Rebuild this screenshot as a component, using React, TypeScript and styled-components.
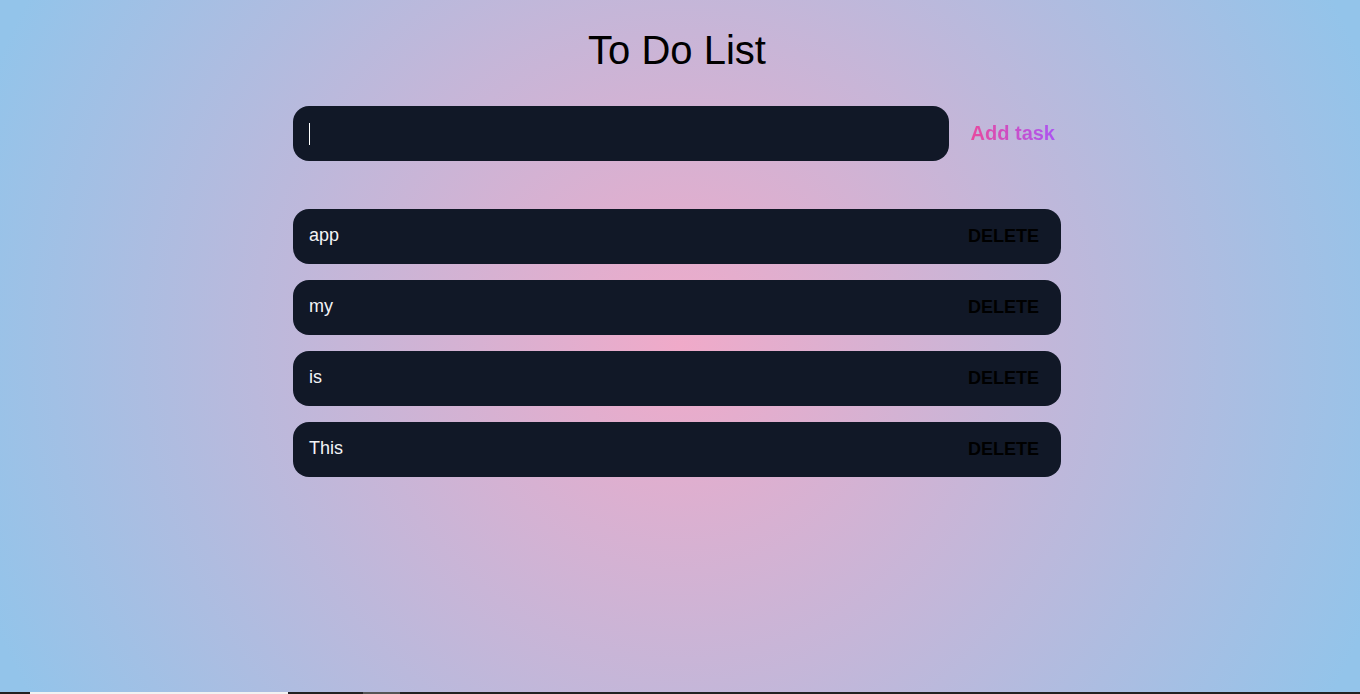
import React, { useState } from "react";
import styled, { createGlobalStyle } from "styled-components";

const GlobalStyle = createGlobalStyle`
  html, body {
    margin: 0;
    padding: 0;
  }
  body {
    font-family: "Liberation Sans", Arial, sans-serif;
    background: #222;
    overflow: hidden;
  }
`;

const Page = styled.main`
  min-height: 692px;
  box-sizing: border-box;
  background: radial-gradient(circle farthest-corner at 50% 50%, #f0aac9 0%, #93c4ea 97%);
  display: flex;
  flex-direction: column;
  align-items: center;
  padding: 27px 6px 0 0;
`;

const Title = styled.h1`
  margin: 0;
  font-size: 40px;
  font-weight: 400;
  line-height: 46px;
  color: #000;
`;

const Board = styled.section`
  width: 768px;
  display: flex;
  flex-direction: column;
  margin-top: 33px;
`;

const InputRow = styled.form`
  display: flex;
  align-items: center;
  gap: 16px;
`;

const Field = styled.div`
  flex: 1;
  position: relative;
  display: flex;
`;

const TaskInput = styled.input<{ $empty: boolean }>`
  flex: 1;
  height: 55px;
  box-sizing: border-box;
  border: none;
  outline: none;
  border-radius: 16px;
  background: #111827;
  color: #f3f4f6;
  caret-color: ${(p) => (p.$empty ? "transparent" : "#ffffff")};
  padding: 0 16px;
  font-family: inherit;
  font-size: 18px;
`;

const Caret = styled.span`
  position: absolute;
  left: 16px;
  top: 17px;
  width: 1px;
  height: 22px;
  background: #ffffff;
  pointer-events: none;
`;

const AddButton = styled.button`
  border: none;
  background: linear-gradient(90deg, #ec4899, #a855f7);
  -webkit-background-clip: text;
  background-clip: text;
  color: transparent;
  font-family: inherit;
  font-size: 20px;
  font-weight: 700;
  padding: 0 6px;
  cursor: pointer;
`;

const List = styled.ul`
  list-style: none;
  margin: 48px 0 0;
  padding: 0;
  display: flex;
  flex-direction: column;
  gap: 16px;
`;

const Item = styled.li`
  height: 55px;
  box-sizing: border-box;
  border-radius: 16px;
  background: #111827;
  display: flex;
  align-items: center;
  justify-content: space-between;
  padding: 0 16px;
`;

const ItemText = styled.span`
  color: #f3f4f6;
  font-size: 18px;
  margin-top: -2px;
`;

const DeleteButton = styled.button`
  border: none;
  background: transparent;
  color: #000;
  font-family: inherit;
  font-size: 18px;
  font-weight: 700;
  padding: 0 6px;
  cursor: pointer;
`;

const Strip = styled.div`
  height: 2px;
  display: flex;
  background: #222;
`;

const StripPart = styled.span<{ $w: number; $c: string }>`
  width: ${(p) => p.$w}px;
  background: ${(p) => p.$c};
  flex: none;
`;

export default function App() {
  const [tasks, setTasks] = useState(["app", "my", "is", "This"]);
  const [value, setValue] = useState("");

  const add = (e: React.FormEvent) => {
    e.preventDefault();
    if (!value.trim()) return;
    setTasks([value.trim(), ...tasks]);
    setValue("");
  };

  const empty = value.length === 0;

  return (
    <>
      <GlobalStyle />
      <Page>
        <Title>To Do List</Title>
        <Board>
          <InputRow onSubmit={add}>
            <Field>
              <TaskInput
                autoFocus
                $empty={empty}
                value={value}
                onChange={(e) => setValue(e.target.value)}
              />
              {empty && <Caret />}
            </Field>
            <AddButton type="submit">Add task</AddButton>
          </InputRow>
          <List>
            {tasks.map((t, i) => (
              <Item key={t + i}>
                <ItemText>{t}</ItemText>
                <DeleteButton onClick={() => setTasks(tasks.filter((_, j) => j !== i))}>
                  DELETE
                </DeleteButton>
              </Item>
            ))}
          </List>
        </Board>
      </Page>
      <Strip>
        <StripPart $w={30} $c="#222" />
        <StripPart $w={258} $c="#f2f2f2" />
        <StripPart $w={75} $c="#222" />
        <StripPart $w={37} $c="#555" />
      </Strip>
    </>
  );
}
